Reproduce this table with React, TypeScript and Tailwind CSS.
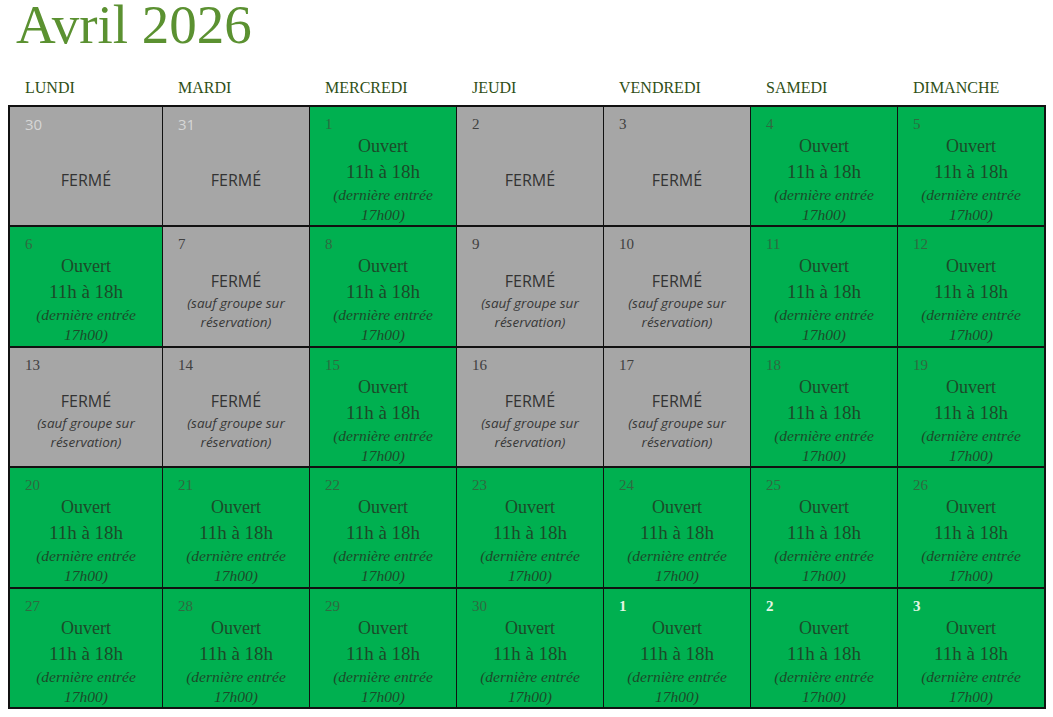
import React from "react";

type Kind = "open" | "closed" | "closedSauf";
type NumStyle = "prev" | "normal" | "next";
interface Day {
  n: number;
  kind: Kind;
  ns?: NumStyle;
}

const O = (n: number, ns: NumStyle = "normal"): Day => ({ n, kind: "open", ns });
const C = (n: number, ns: NumStyle = "normal"): Day => ({ n, kind: "closed", ns });
const S = (n: number): Day => ({ n, kind: "closedSauf", ns: "normal" });

const rows: Day[][] = [
  [C(30, "prev"), C(31, "prev"), O(1), C(2), C(3), O(4), O(5)],
  [O(6), S(7), O(8), S(9), S(10), O(11), O(12)],
  [S(13), S(14), O(15), S(16), S(17), O(18), O(19)],
  [O(20), O(21), O(22), O(23), O(24), O(25), O(26)],
  [O(27), O(28), O(29), O(30), O(1, "next"), O(2, "next"), O(3, "next")],
];

const days = ["LUNDI", "MARDI", "MERCREDI", "JEUDI", "VENDREDI", "SAMEDI", "DIMANCHE"];

const serif = "font-['Liberation_Serif','Times_New_Roman',serif]";
const sans = "font-['Open_Sans','Liberation_Sans',sans-serif]";

function Num({ d }: { d: Day }) {
  if (d.ns === "prev") {
    return (
      <div className={`h-[20px] pl-[15px] text-[15px] leading-[20px] text-[#d6d6d6] ${sans}`}>{d.n}</div>
    );
  }
  if (d.ns === "next") {
    return (
      <div className={`h-[20px] pl-[15px] text-[15px] font-bold leading-[20px] text-[#e4f5e4] ${serif}`}>{d.n}</div>
    );
  }
  const color = d.kind === "open" ? "text-[#2f6a40]" : "text-[#404040]";
  return <div className={`h-[20px] pl-[15px] text-[15px] leading-[20px] ${color} ${serif}`}>{d.n}</div>;
}

function Cell({ d }: { d: Day }) {
  const bg = d.kind === "open" ? "bg-[#00b050]" : "bg-[#a6a6a6]";
  return (
    <div className={`${bg} flex min-w-0 flex-col overflow-hidden pt-[7px]`}>
      <Num d={d} />
      {d.kind === "open" ? (
        <div className={`flex flex-col items-center text-center text-[#1c4a29] ${serif}`}>
          <div className="text-[18px] leading-[25px]">Ouvert</div>
          <div className="text-[19px] leading-[26px]">11h à 18h</div>
          <div className="text-[15.5px] italic leading-[20px]">(dernière entrée</div>
          <div className="text-[15.5px] italic leading-[20px]">17h00)</div>
        </div>
      ) : (
        <div className={`flex flex-1 flex-col items-center justify-center text-center ${sans}`}>
          <div className="text-[16px] leading-[24px] text-[#333333]">FERMÉ</div>
          {d.kind === "closedSauf" && (
            <div className="mt-[1px] text-[13.5px] italic leading-[19px] text-[#383838]">
              <div>(sauf groupe sur</div>
              <div>réservation)</div>
            </div>
          )}
        </div>
      )}
    </div>
  );
}

export default function App() {
  return (
    <div className="h-[717px] w-[1053px] overflow-hidden bg-white">
      <div className="ml-[8px] w-[1038px]">
        <h1 className={`mb-[1px] pl-[8px] text-[55px] leading-[49px] text-[#5b9131] ${serif}`}>
          Avril 2026
        </h1>
        <div className="grid grid-cols-[152px_repeat(6,minmax(0,1fr))] gap-x-px px-[2px] pb-[7px] pt-[28px]">
          {days.map((d) => (
            <div key={d} className={`pl-[15px] text-[16px] leading-[20px] text-[#2f4f16] ${serif}`}>
              {d}
            </div>
          ))}
        </div>
        <div className="grid h-[604px] grid-cols-[152px_repeat(6,minmax(0,1fr))] grid-rows-5 gap-x-px gap-y-[2px] bg-[#111111] p-[2px]">
          {rows.flat().map((d, i) => (
            <Cell key={i} d={d} />
          ))}
        </div>
      </div>
    </div>
  );
}
